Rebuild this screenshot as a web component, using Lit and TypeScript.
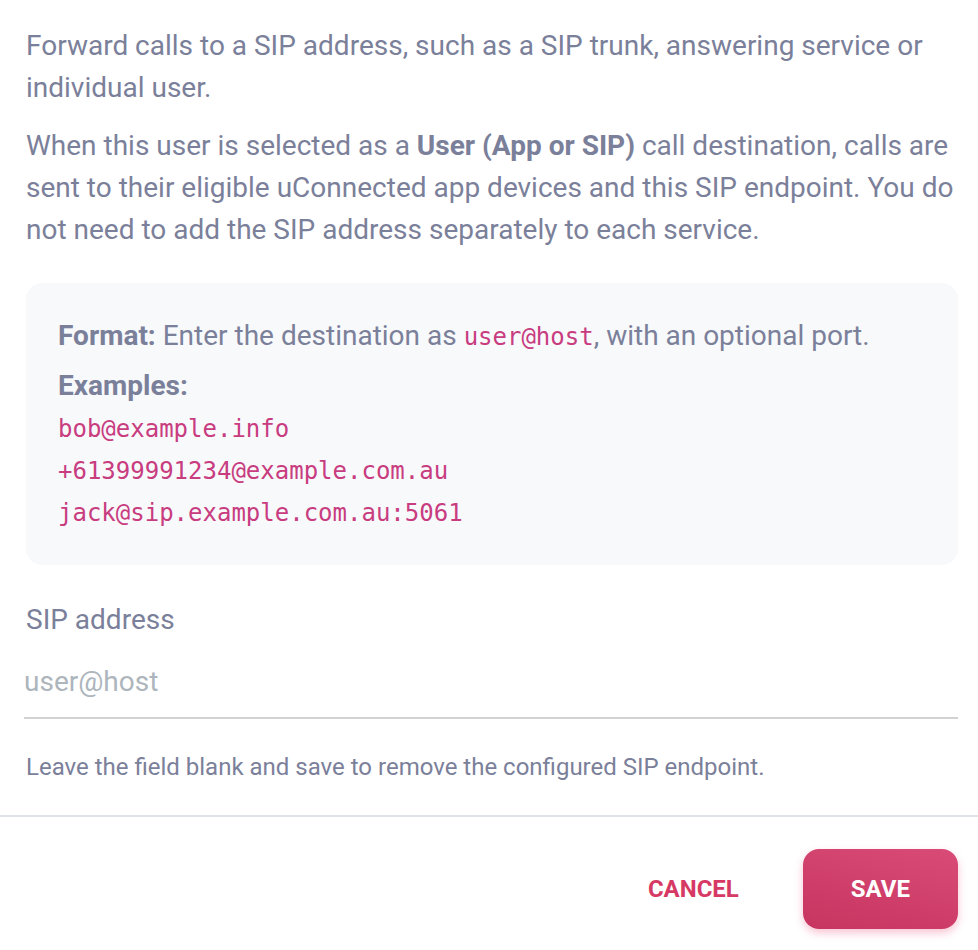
import { LitElement, html, css } from "lit";
import { customElement, state } from "lit/decorators.js";

@customElement("app-root")
export class AppRoot extends LitElement {
  static styles = css`
    :host {
      display: block;
      box-sizing: border-box;
      background: #fff;
      color: #7b809a;
      font-family: Roboto, "Liberation Sans", sans-serif;
      font-size: 28px;
      line-height: 42px;
    }
    .body {
      padding: 25px 20px 30px 26px;
    }
    p {
      margin: 0 0 16px;
    }
    b {
      font-weight: 700;
    }
    .panel {
      margin-top: 32px;
      padding: 32px;
      border-radius: 16px;
      background: #f8f9fb;
    }
    .panel p {
      margin-bottom: 8px;
    }
    code {
      font-family: "DejaVu Sans Mono", "Liberation Mono", monospace;
      font-size: 24px;
      line-height: 1;
      color: #c83c80;
    }
    .examples {
      margin: 0;
      padding: 0;
      list-style: none;
    }
    label {
      display: block;
      margin-top: 34px;
    }
    input {
      display: block;
      box-sizing: border-box;
      width: calc(100% + 2px);
      height: 78px;
      margin: 0 0 0 -2px;
      padding: 4px 0 0;
      border: 0;
      border-bottom: 2px solid #d2d2d2;
      border-radius: 0;
      outline: 0;
      background: none;
      color: inherit;
      font: inherit;
    }
    input::placeholder {
      color: #adb5bd;
      opacity: 1;
    }
    .hint {
      margin: 30px 0 0;
      font-size: 24px;
      line-height: 36px;
    }
    .actions {
      display: flex;
      justify-content: flex-end;
      gap: 16px;
      padding: 32px 20px;
      border-top: 2px solid #dee2e6;
    }
    button {
      height: 80px;
      padding: 0 48px;
      border: 0;
      border-radius: 16px;
      background: none;
      color: #d63964;
      font: 700 24px/36px Roboto, "Liberation Sans", sans-serif;
      text-transform: uppercase;
      cursor: pointer;
    }
    .save {
      background: linear-gradient(15deg, #c73460, #d94c77);
      color: #fff;
      box-shadow: 0 4px 8px rgba(233, 60, 110, 0.3);
    }
  `;

  @state() private address = "";

  private examples = ["bob@example.info", "+61399991234@example.com.au", "jack@sip.example.com.au:5061"];

  render() {
    return html`
      <form @submit=${(e: Event) => e.preventDefault()}>
        <div class="body">
          <p>Forward calls to a SIP address, such as a SIP trunk, answering service or individual user.</p>
          <p>
            When this user is selected as a <b>User (App or SIP)</b> call destination, calls are sent to their eligible
            uConnected app devices and this SIP endpoint. You do not need to add the SIP address separately to each
            service.
          </p>
          <section class="panel">
            <p><b>Format:</b> Enter the destination as <code>user@host</code>, with an optional port.</p>
            <b>Examples:</b>
            <ul class="examples">
              ${this.examples.map((x) => html`<li><code>${x}</code></li>`)}
            </ul>
          </section>
          <label for="sip">SIP address</label>
          <input
            id="sip"
            type="text"
            placeholder="user@host"
            aria-describedby="hint"
            .value=${this.address}
            @input=${(e: Event) => (this.address = (e.target as HTMLInputElement).value)}
          />
          <p class="hint" id="hint">Leave the field blank and save to remove the configured SIP endpoint.</p>
        </div>
        <div class="actions">
          <button type="button">Cancel</button>
          <button type="submit" class="save">Save</button>
        </div>
      </form>
    `;
  }
}
